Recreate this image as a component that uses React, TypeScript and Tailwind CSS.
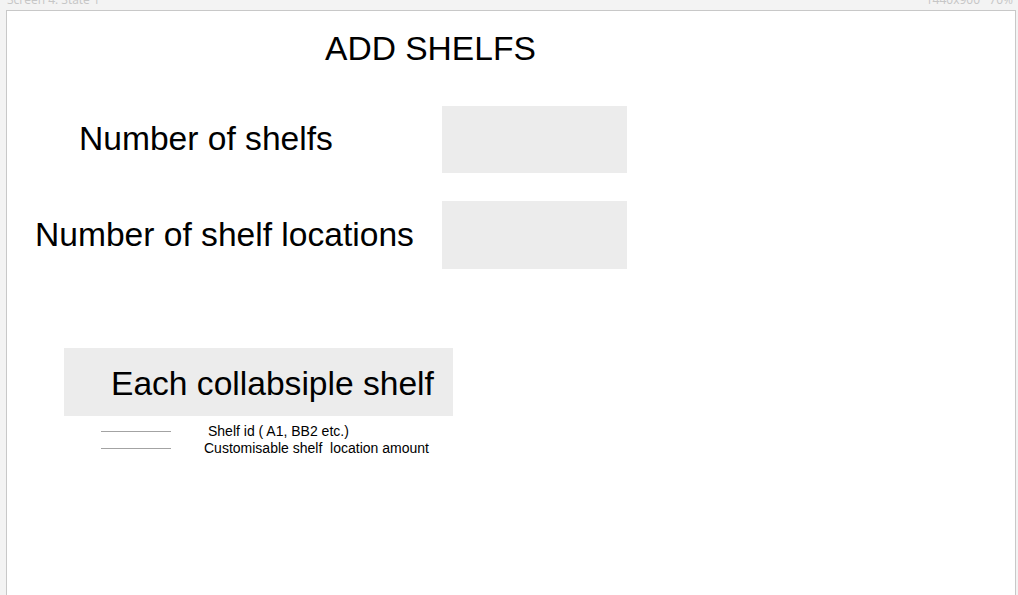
export default function App() {
  return (
    <div className="h-[595px] w-full overflow-hidden bg-[#f3f3f3] font-['Liberation_Sans',Arial,sans-serif] text-black">
      <div className="flex h-[10px] items-start justify-between overflow-hidden pl-[7px] pr-[5px] font-['Open_Sans',sans-serif] text-[12px] leading-[12px] text-[#c6c6c6]">
        <span className="-mt-[6px]">Screen 4: State 1</span>
        <span className="-mt-[6px] whitespace-pre">1440x900   70%</span>
      </div>
      <div className="ml-[6px] mr-[2px] h-[620px] border border-[#c8c8c8] bg-white">
        <h1 className="mt-[21px] pl-[318px] text-[33.6px] leading-none">ADD SHELFS</h1>

        <div className="mt-[40px] flex flex-col gap-[28px]">
          <div className="flex items-center">
            <div className="w-[435px] pl-[72px] text-[33.6px] leading-none">Number of shelfs</div>
            <div className="h-[67px] w-[185px] bg-[#ececec]" />
          </div>
          <div className="flex items-center">
            <div className="w-[435px] pl-[28px] text-[33.6px] leading-none">Number of shelf locations</div>
            <div className="h-[68px] w-[185px] bg-[#ececec]" />
          </div>
        </div>

        <div className="ml-[57px] mt-[79px] flex h-[68px] w-[389px] items-center bg-[#ececec] pl-[47px] pt-[4px] text-[33.6px] leading-none">
          Each collabsiple shelf
        </div>

        <div className="mt-[7px] flex flex-col text-[14px] leading-none">
          <div className="flex h-[17px] items-center">
            <div className="ml-[94px] h-px w-[70px] bg-[#a3a3a3]" />
            <span className="ml-[37px]">Shelf id ( A1, BB2 etc.)</span>
          </div>
          <div className="flex h-[17px] items-center">
            <div className="ml-[94px] h-px w-[70px] bg-[#a3a3a3]" />
            <span className="ml-[33px] whitespace-pre">Customisable shelf  location amount</span>
          </div>
        </div>
      </div>
    </div>
  );
}
